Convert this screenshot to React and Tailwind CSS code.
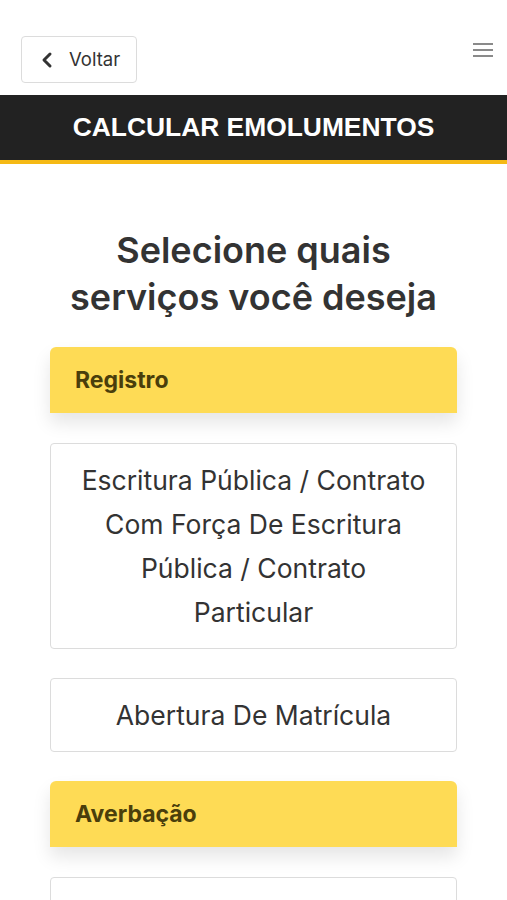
import React from "react";
import { ChevronLeft } from "lucide-react";

const sections = [
  {
    title: "Registro",
    items: [
      "Escritura Pública / Contrato Com Força De Escritura Pública / Contrato Particular",
      "Abertura De Matrícula",
    ],
  },
  {
    title: "Averbação",
    items: ["Averbação Com Valor Declarado"],
  },
];

export default function App() {
  return (
    <div className="min-h-screen bg-white font-['Inter',sans-serif] overflow-hidden h-[900px]">
      {/* Top bar */}
      <div className="flex items-start justify-between pl-[21px] pr-[14px] pt-[36px] pb-[12px]">
        <button className="flex items-center gap-[10px] h-[47px] w-[116px] pl-[13px] rounded-[4px] border border-[#dcdcdc] bg-white text-[#333] text-[18.5px]">
          <ChevronLeft className="h-[24px] w-[24px]" strokeWidth={3} />
          Voltar
        </button>
        <div className="flex flex-col gap-[4px] mt-[7px] w-[20px]">
          <span className="h-[2px] bg-[#8a8a8a]" />
          <span className="h-[2px] bg-[#8a8a8a]" />
          <span className="h-[2px] bg-[#8a8a8a]" />
        </div>
      </div>

      {/* Header */}
      <div className="bg-[#222222] border-b-[4px] border-[#f5b915] h-[69px] flex items-center justify-center">
        <h1 className="text-white text-[26.4px] font-bold font-['Liberation_Sans',Arial,sans-serif]">
          CALCULAR EMOLUMENTOS
        </h1>
      </div>

      <div className="px-[50px] pt-[63px]">
        <h2 className="text-center text-[36px] leading-[47px] font-semibold text-[#333]">
          Selecione quais serviços você deseja
        </h2>

        <div className="mt-[26px] flex flex-col">
          {sections.map((s) => (
            <div key={s.title} className="mb-[29px]">
              <div className="bg-[#fedb55] rounded-t-[6px] h-[66px] flex items-center px-[25px] shadow-[0_10px_18px_rgba(0,0,0,0.10)]">
                <span className="text-[23px] font-bold text-[#4a3e0b]">{s.title}</span>
              </div>
              <div className="flex flex-col gap-[29px] mt-[30px]">
                {s.items.map((it) => (
                  <div
                    key={it}
                    className="border border-[#dcdcdc] rounded-[4px] bg-white px-[30px] py-[14px] text-center text-[26.5px] leading-[44px] text-[#333]"
                  >
                    {it}
                  </div>
                ))}
              </div>
            </div>
          ))}
        </div>
      </div>
    </div>
  );
}
